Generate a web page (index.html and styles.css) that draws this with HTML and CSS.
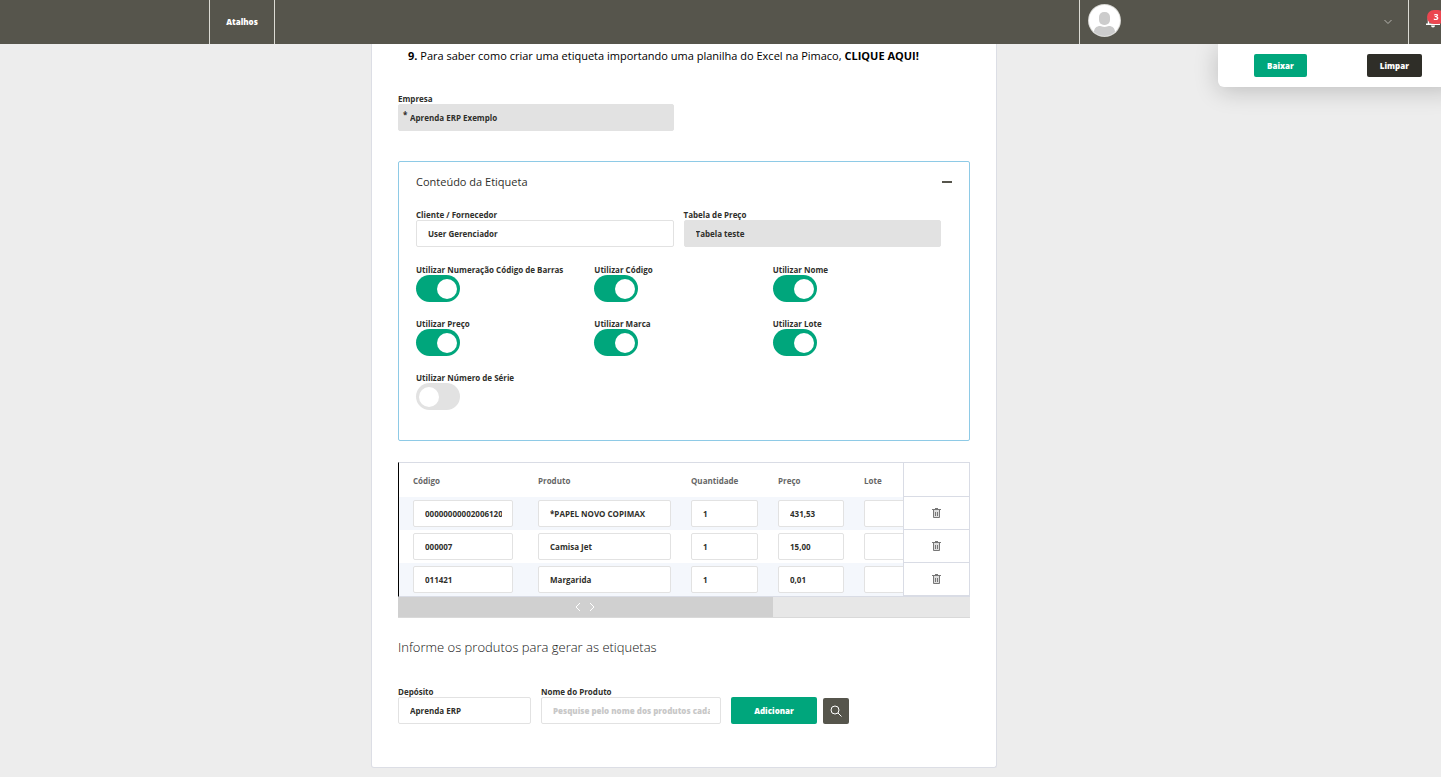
FILE: index.html
```html
<!DOCTYPE html>
<html lang="pt-BR">
<head>
  <meta charset="UTF-8">
  <meta name="viewport" content="width=device-width, initial-scale=1.0">
  <title>Etiquetas</title>
  <link rel="stylesheet" href="styles.css">
</head>
<body>

<header class="topbar">
  <nav class="topbar-nav">
    <a href="#" class="shortcut">Atalhos</a>
  </nav>
  <button class="user-menu" aria-label="Menu do usuário">
    <svg class="avatar" viewBox="0 0 33 33">
      <clipPath id="round"><circle cx="16.500" cy="16.500" r="15.500"/></clipPath>
      <circle cx="16.500" cy="16.500" r="16.500" fill="#d8d8d4"/>
      <circle cx="16.500" cy="16.500" r="15.500" fill="#fff"/>
      <g fill="#ccc" clip-path="url(#round)">
        <rect x="11" y="8" width="11" height="13" rx="5"/>
        <path d="M6 33v-5c0-4 3-6 6-6 2 0 2 1 4.500 1s2.500-1 4.500-1c3 0 6 2 6 6v5z"/>
      </g>
    </svg>
    <svg class="chevron" viewBox="0 0 8 6"><path d="M.5 1L4 4.500 7.500 1"/></svg>
  </button>
  <button class="bell" aria-label="Notificações">
    <svg viewBox="0 0 14 16">
      <path d="M2.500 12V7a4.500 4.500 0 0 1 9 0v5" fill="none" stroke="#fff" stroke-width="1.500"/>
      <path d="M0 11.500h14v1.500H0zM5 13.500h4a2 2 0 0 1-4 0z" fill="#fff"/>
    </svg>
    <span class="badge">3</span>
  </button>
</header>

<main class="page">
  <section class="card">
    <p class="step"><b>9.</b> Para saber como criar uma etiqueta importando uma planilha do Excel na Pimaco, <a href="#">CLIQUE AQUI!</a></p>

    <div class="field company">
      <label for="empresa">Empresa</label>
      <span class="required">*</span>
      <input type="text" id="empresa" class="filled" value="Aprenda ERP Exemplo" readonly>
    </div>

    <div class="panel">
      <div class="panel-head">
        <h2>Conteúdo da Etiqueta</h2>
        <button class="collapse" aria-label="Recolher"></button>
      </div>
      <div class="row-two">
        <div class="field">
          <label for="cliente">Cliente / Fornecedor</label>
          <input type="text" id="cliente" value="User Gerenciador">
        </div>
        <div class="field">
          <label for="tabela">Tabela de Preço</label>
          <input type="text" id="tabela" class="filled" value="Tabela teste" readonly>
        </div>
      </div>
      <div class="toggles">
        <div class="field"><label for="t1">Utilizar Numeração Código de Barras</label><input type="checkbox" class="switch" id="t1" checked></div>
        <div class="field"><label for="t2">Utilizar Código</label><input type="checkbox" class="switch" id="t2" checked></div>
        <div class="field"><label for="t3">Utilizar Nome</label><input type="checkbox" class="switch" id="t3" checked></div>
        <div class="field"><label for="t4">Utilizar Preço</label><input type="checkbox" class="switch" id="t4" checked></div>
        <div class="field"><label for="t5">Utilizar Marca</label><input type="checkbox" class="switch" id="t5" checked></div>
        <div class="field"><label for="t6">Utilizar Lote</label><input type="checkbox" class="switch" id="t6" checked></div>
        <div class="field"><label for="t7">Utilizar Número de Série</label><input type="checkbox" class="switch" id="t7"></div>
      </div>
    </div>

    <div class="table-wrap">
      <table class="products">
        <thead>
          <tr>
            <th class="c-code">Código</th>
            <th class="c-name">Produto</th>
            <th class="c-qty">Quantidade</th>
            <th class="c-price">Preço</th>
            <th class="c-lot">Lote</th>
            <th class="c-action"></th>
          </tr>
        </thead>
        <tbody>
          <tr>
            <td><input type="text" value="00000000002006120" aria-label="Código"></td>
            <td><input type="text" value="*PAPEL NOVO COPIMAX" aria-label="Produto"></td>
            <td><input type="text" value="1" aria-label="Quantidade"></td>
            <td><input type="text" value="431,53" aria-label="Preço"></td>
            <td><input type="text" aria-label="Lote"></td>
            <td class="c-action"><button class="trash" aria-label="Excluir"><svg viewBox="0 0 9 10"><path d="M0 1.500h9M3 .5h3M1.500 2v7.500h6V2M3.500 4v4M5.500 4v4"/></svg></button></td>
          </tr>
          <tr>
            <td><input type="text" value="000007" aria-label="Código"></td>
            <td><input type="text" value="Camisa Jet" aria-label="Produto"></td>
            <td><input type="text" value="1" aria-label="Quantidade"></td>
            <td><input type="text" value="15,00" aria-label="Preço"></td>
            <td><input type="text" aria-label="Lote"></td>
            <td class="c-action"><button class="trash" aria-label="Excluir"><svg viewBox="0 0 9 10"><path d="M0 1.500h9M3 .5h3M1.500 2v7.500h6V2M3.500 4v4M5.500 4v4"/></svg></button></td>
          </tr>
          <tr>
            <td><input type="text" value="011421" aria-label="Código"></td>
            <td><input type="text" value="Margarida" aria-label="Produto"></td>
            <td><input type="text" value="1" aria-label="Quantidade"></td>
            <td><input type="text" value="0,01" aria-label="Preço"></td>
            <td><input type="text" aria-label="Lote"></td>
            <td class="c-action"><button class="trash" aria-label="Excluir"><svg viewBox="0 0 9 10"><path d="M0 1.500h9M3 .5h3M1.500 2v7.500h6V2M3.500 4v4M5.500 4v4"/></svg></button></td>
          </tr>
        </tbody>
      </table>
    </div>
    <div class="scrollbar">
      <div class="thumb">
        <svg viewBox="0 0 22 10"><path d="M6 1L2 5l4 4M16 1l4 4-4 4"/></svg>
      </div>
    </div>

    <h3 class="subtitle">Informe os produtos para gerar as etiquetas</h3>

    <form class="add-form">
      <div class="field deposit">
        <label for="deposito">Depósito</label>
        <input type="text" id="deposito" value="Aprenda ERP">
      </div>
      <div class="field product">
        <label for="produto">Nome do Produto</label>
        <input type="text" id="produto" placeholder="Pesquise pelo nome dos produtos cadastrados">
      </div>
      <div class="form-actions">
        <button type="button" class="btn add">Adicionar</button>
        <button type="button" class="search" aria-label="Pesquisar">
          <svg viewBox="0 0 12 12"><circle cx="5" cy="5" r="4"/><path d="M8 8l3.500 3.500"/></svg>
        </button>
      </div>
    </form>
  </section>

  <aside class="side-actions">
    <button class="btn">Baixar</button>
    <button class="btn dark">Limpar</button>
  </aside>
</main>

</body>
</html>
```

FILE: styles.css
```css
* {
  box-sizing: border-box;
}
body {
  margin: 0;
  background: #ededed;
  color: #2f2f2b;
  font-family: "Open Sans", sans-serif;
  font-size: 8px;
  overflow-x: hidden;
}
button, input {
  font-family: inherit;
  font-size: 8px;
}
button {
  border: none;
  padding: 0;
  cursor: pointer;
}

/* top bar */
.topbar {
  position: sticky;
  top: 0;
  z-index: 10;
  display: flex;
  height: 44px;
  background: #56554c;
}
.topbar-nav {
  flex: 1;
  padding-left: 209px;
}
.shortcut {
  display: flex;
  align-items: center;
  justify-content: center;
  width: 66px;
  height: 44px;
  padding-bottom: 2px;
  border-left: 1px solid #dcdbd4;
  border-right: 1px solid #dcdbd4;
  color: #fff;
  font-weight: 800;
  text-decoration: none;
}
.user-menu {
  display: flex;
  align-items: center;
  justify-content: space-between;
  width: 330px;
  padding: 0 16px 3px 8px;
  background: none;
  border-left: 1px solid #dcdbd4;
  border-right: 1px solid #dcdbd4;
}
.avatar {
  width: 33px;
  height: 33px;
}
.chevron {
  width: 8px;
  height: 6px;
  margin-top: 3px;
  fill: none;
  stroke: #b5b4ae;
}
.bell {
  position: relative;
  width: 32px;
  padding-left: 17px;
  background: none;
  text-align: left;
}
.bell svg {
  display: block;
  width: 14px;
  height: 16px;
  margin-bottom: 4px;
}
.badge {
  position: absolute;
  top: 10px;
  left: 18px;
  width: 18px;
  height: 14px;
  border-radius: 7px;
  background: #eb4650;
  color: #fff;
  font-size: 9px;
  font-weight: 700;
  line-height: 14px;
  text-align: center;
}

/* page */
.page {
  display: flex;
  align-items: flex-start;
  justify-content: space-between;
  padding: 0 0 9px 371px;
}
.card {
  flex: 0 1 626px;
  min-width: 0;
  padding: 4px 26px 43px;
  background: #fff;
  border: 1px solid #dcdee5;
  border-top: none;
  border-radius: 0 0 3px 3px;
}
.step {
  margin: 0 0 30px;
  padding-left: 10px;
  color: #000;
  font-size: 11px;
  line-height: 16px;
}
.step a {
  color: #000;
  font-weight: 700;
  text-decoration: none;
}
.side-actions {
  display: flex;
  justify-content: space-between;
  width: 240px;
  margin-right: -17px;
  padding: 10px 36px;
  background: #fff;
  border-radius: 0 0 6px 6px;
  box-shadow: 0 4px 24px rgba(0, 0, 0, 0.2);
}
.btn {
  height: 23px;
  padding: 0 13px;
  border-radius: 2px;
  background: #00a67c;
  color: #fff;
  font-weight: 800;
}
.btn.dark {
  background: #2f2e28;
}

/* fields */
.field {
  display: flex;
  flex-direction: column;
  align-items: flex-start;
  position: relative;
}
.field label {
  font-weight: 700;
  line-height: 10px;
}
input[type="text"] {
  width: 100%;
  height: 27px;
  padding: 0 10px 1px 11px;
  border: 1px solid #e2e2e2;
  border-radius: 2px;
  background: #fff;
  color: #2f2f2b;
  font-weight: 700;
  outline: none;
}
input.filled {
  background: #e2e2e2;
}
input::placeholder {
  color: #c8c8c8;
  font-weight: 800;
}
.company {
  width: 276px;
}
.required {
  position: absolute;
  top: 16px;
  left: 5px;
  font-weight: 700;
  line-height: 10px;
}

/* collapsible panel */
.panel {
  margin-top: 30px;
  padding: 0 28px 30px 17px;
  border: 1px solid #8ecae6;
  border-radius: 2px;
}
.panel-head {
  display: flex;
  align-items: center;
  justify-content: space-between;
  height: 40px;
  margin: 0 -11px 8px 0;
}
.panel-head h2 {
  margin: 0;
  font-size: 11px;
  font-weight: 400;
  line-height: 16px;
}
.collapse {
  width: 10px;
  height: 2px;
  background: #56554c;
}
.row-two {
  display: grid;
  grid-template-columns: 1fr 1fr;
  gap: 10px;
}
.toggles {
  display: grid;
  grid-template-columns: repeat(3, 1fr);
  gap: 17px 10px;
  margin-top: 18px;
}
.toggles label {
  white-space: nowrap;
}
.switch {
  appearance: none;
  display: flex;
  align-items: center;
  width: 44px;
  height: 27px;
  margin: 0;
  padding: 0 3px;
  border-radius: 14px;
  background: #e2e2e2;
  cursor: pointer;
}
.switch::before {
  content: "";
  width: 20px;
  height: 20px;
  border-radius: 50%;
  background: #fff;
}
.switch:checked {
  justify-content: flex-end;
  background: #00a67c;
}

/* products table */
.table-wrap {
  margin-top: 21px;
  overflow: hidden;
  border-top: 1px solid #d9dce5;
  border-bottom: 1px solid #d9dce5;
  border-left: 1px solid #000;
}
.products {
  width: 609px;
  table-layout: fixed;
  border-collapse: separate;
  border-spacing: 0;
}
.products th {
  height: 34px;
  padding: 0 10px;
  color: #666;
  font-weight: 700;
  text-align: left;
}
.products td {
  height: 33px;
  padding: 3px 10px;
}
.products th:first-child,
.products td:first-child {
  padding-left: 14px;
  padding-right: 15px;
}
.products input {
  display: block;
}
.products tbody tr:nth-child(odd) td {
  background: #f4f7fc;
}
.c-code { width: 129px; }
.c-name { width: 153px; }
.c-qty { width: 87px; }
.c-price { width: 86px; }
.c-lot { width: 87px; }
.products .c-action,
.products tbody tr:nth-child(odd) .c-action {
  position: sticky;
  right: 0;
  width: 67px;
  background: #fff;
  border: 1px solid #d9dce5;
  border-top: none;
  text-align: center;
}
.trash {
  display: block;
  margin: 0 auto;
  background: none;
}
.trash svg {
  display: block;
  width: 9px;
  height: 10px;
  fill: #ddd;
  stroke: #777;
}
.scrollbar {
  height: 21px;
  background: #e7e7e7;
  border-bottom: 1px solid #d9d9d9;
}
.thumb {
  display: flex;
  align-items: center;
  justify-content: center;
  width: 65.5%;
  height: 20px;
  background: #d0d0d0;
}
.thumb svg {
  width: 22px;
  height: 10px;
  fill: none;
  stroke: #fff;
}

/* add product */
.subtitle {
  margin: 19px 0 30px;
  color: #111;
  font-size: 13px;
  font-weight: 300;
  line-height: 20px;
}
.add-form {
  display: flex;
  align-items: flex-end;
  gap: 10px;
}
.deposit {
  width: 133px;
}
.product {
  width: 180px;
}
.form-actions {
  display: flex;
  align-items: flex-end;
  gap: 6px;
}
.add {
  width: 86px;
  height: 27px;
}
.search {
  display: flex;
  align-items: center;
  justify-content: center;
  width: 26px;
  height: 26px;
  border-radius: 2px;
  background: #56554c;
}
.search svg {
  width: 12px;
  height: 12px;
  fill: none;
  stroke: #fff;
}
```
